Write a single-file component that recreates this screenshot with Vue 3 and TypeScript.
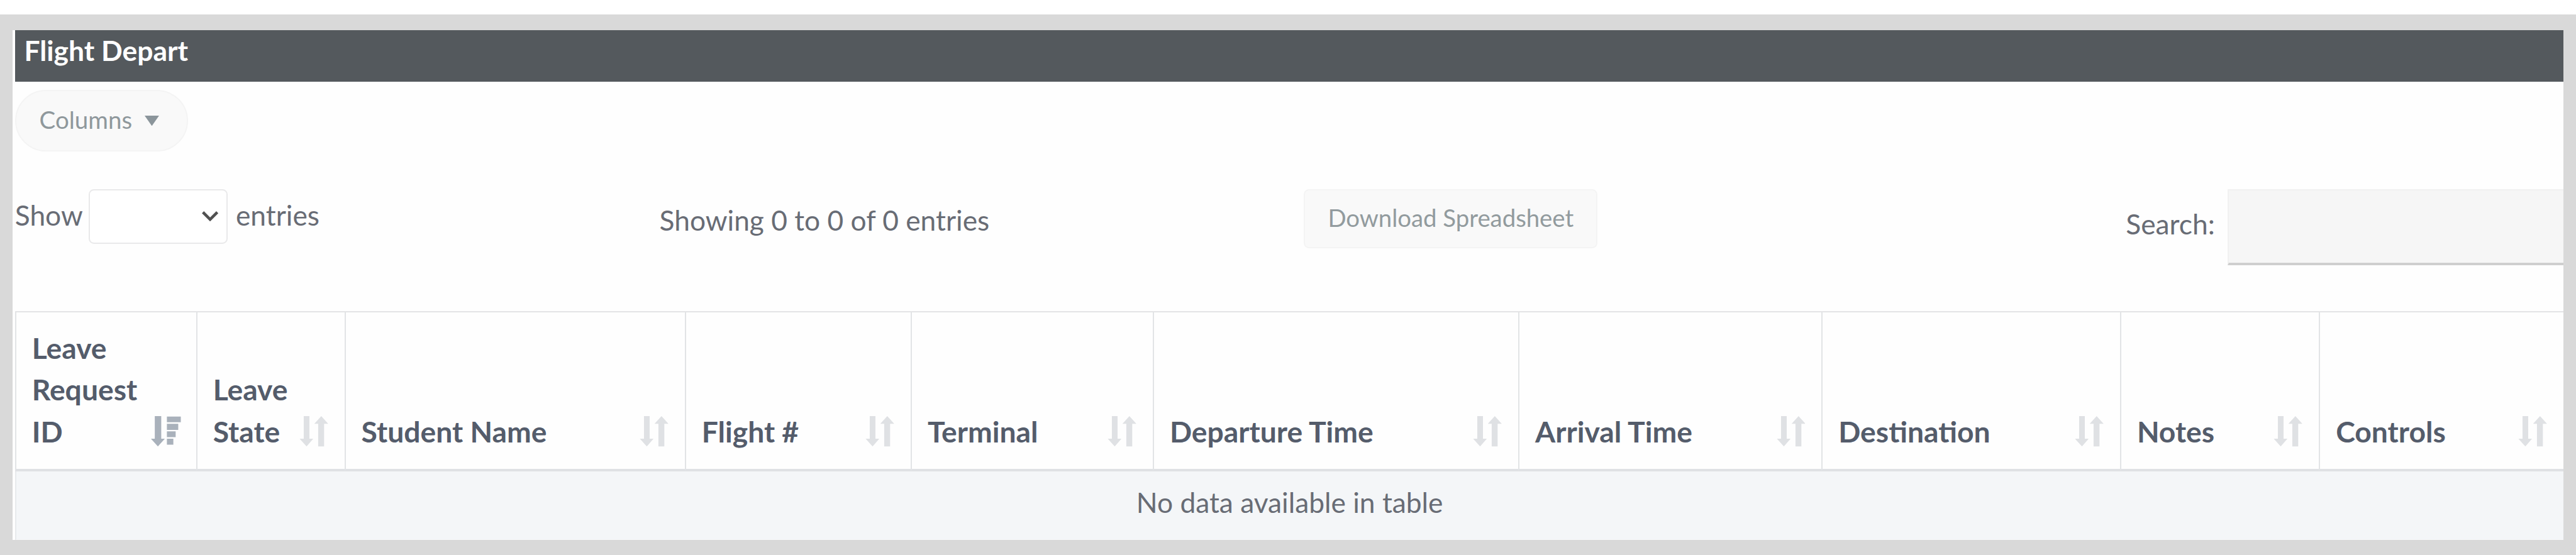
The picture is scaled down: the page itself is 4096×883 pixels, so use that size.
<script setup lang="ts">
interface Column {
  label: string
  width: number
  active?: boolean
}

// Widths are shares of the table's full width.
const columns: Column[] = [
  { label: 'Leave Request ID', width: 351.5, active: true },
  { label: 'Leave State', width: 288 },
  { label: 'Student Name', width: 660.5 },
  { label: 'Flight #', width: 438.5 },
  { label: 'Terminal', width: 470 },
  { label: 'Departure Time', width: 709.5 },
  { label: 'Arrival Time', width: 588.5 },
  { label: 'Destination', width: 579.5 },
  { label: 'Notes', width: 386 },
  { label: 'Controls', width: 474 },
]

const total = columns.reduce((sum, c) => sum + c.width, 0)
const share = (c: Column): string => `${(c.width / total) * 100}%`
</script>

<template>
  <div class="page">
    <main class="card">
      <h1 class="title">Flight Depart</h1>

      <button class="columns-button" type="button">
        Columns
        <svg class="caret" viewBox="0 0 28 20"><path d="M0 0H28L14 20Z" /></svg>
      </button>

      <div class="toolbar">
        <label class="length">
          Show
          <span class="select">
            <svg class="chevron" viewBox="0 0 32 20"><path d="M2 2L16 16L30 2" /></svg>
          </span>
          entries
        </label>
        <div class="info">Showing 0 to 0 of 0 entries</div>
        <div class="export"><button class="download" type="button">Download Spreadsheet</button></div>
        <label class="search">
          <span class="search-label">Search:</span>
          <input class="search-input" type="text" />
        </label>
      </div>

      <table class="table">
        <colgroup>
          <col v-for="c in columns" :key="c.label" :style="{ width: share(c) }" />
        </colgroup>
        <thead>
          <tr>
            <th v-for="c in columns" :key="c.label">
              <div class="head">
                <span class="label" :class="{ narrow: c.active }">{{ c.label }}</span>
                <svg v-if="c.active" class="sort active" viewBox="0 0 58 59">
                  <path d="M7.500 0H20V44H27L13.500 59L0 44H7.500ZM31 1H58V12H31ZM31 15H53V27H31ZM31 29.500H48V41H31ZM31 44H43.500V55.500H31Z" />
                </svg>
                <svg v-else class="sort" viewBox="0 0 56 59">
                  <path d="M8.500 0H19.500V44H27L14 59L0.500 44H8.500ZM42.500 0L56 15H48V59H36.500V15H29Z" />
                </svg>
              </div>
            </th>
          </tr>
        </thead>
        <tbody>
          <tr>
            <td :colspan="columns.length">No data available in table</td>
          </tr>
        </tbody>
      </table>
    </main>
  </div>
</template>

<style>
html {
  font-size: 8.192px;
}
body {
  margin: 0;
  overflow: hidden;
  background: #fff;
}
</style>

<style scoped>
.page {
  box-sizing: border-box;
  height: 100vh;
  border-top: 2.9rem solid #fff;
  padding: 3rem 2.5rem 2.8rem;
  background: #d9d9d9;
  color: #686c75;
  font-family: Lato, "Liberation Sans", sans-serif;
  font-size: 5.41rem;
  line-height: 8.1rem;
}
.card {
  box-sizing: border-box;
  height: 99.1rem;
  padding-left: 0.4rem;
  overflow: hidden;
  background: #fefefe;
}
.title {
  box-sizing: border-box;
  height: 10.05rem;
  margin: 0;
  padding-left: 1.8rem;
  background: #54595d;
  color: #fff;
  font-size: 5.42rem;
  font-weight: 700;
  line-height: 7.9rem;
}
.columns-button {
  display: flex;
  align-items: center;
  box-sizing: border-box;
  width: 33.6rem;
  height: 11.9rem;
  margin-top: 1.65rem;
  padding: 0 0 0.6rem 4.5rem;
  border: 0.3rem solid #f4f4f4;
  border-radius: 6rem;
  background: #f9f9f9;
  color: #8f989c;
  font: inherit;
  font-size: 4.7rem;
}
.caret {
  width: 2.8rem;
  height: 2rem;
  margin: 0.6rem 0 0 2.4rem;
  fill: #8b959b;
}
.toolbar {
  display: grid;
  grid-template-columns: 125.1rem 125.1rem 1fr auto;
  align-items: start;
  height: 23.7rem;
  margin-top: 7.3rem;
}
.length {
  display: flex;
  align-items: flex-start;
  line-height: 9.9rem;
}
.select {
  display: flex;
  align-items: center;
  justify-content: flex-end;
  box-sizing: border-box;
  width: 27rem;
  height: 10.6rem;
  margin: 0 1.6rem 0 1.1rem;
  padding-right: 1.5rem;
  border: 0.3rem solid #e9e9ea;
  border-radius: 1rem;
  background: #fff;
}
.chevron {
  width: 3.2rem;
  height: 2rem;
  fill: none;
  stroke: #505050;
  stroke-width: 5.5;
}
.info {
  padding-top: 2rem;
}
.download {
  display: flex;
  align-items: center;
  justify-content: center;
  box-sizing: border-box;
  width: 57rem;
  height: 11.5rem;
  padding: 0 0 0.5rem;
  border: 0.3rem solid #f4f4f4;
  border-radius: 1rem;
  background: #f9f9f9;
  color: #929b9e;
  font: inherit;
  font-size: 4.68rem;
}
.search {
  display: flex;
  align-items: center;
}
.search-label {
  margin-right: 2.5rem;
  padding-bottom: 1.3rem;
}
.search-input {
  box-sizing: border-box;
  width: 65.1rem;
  height: 14.8rem;
  padding: 0 2rem;
  border: 0.3rem solid #f1f1f1;
  border-width: 0.3rem 0 0.5rem 0.3rem;
  border-bottom-color: #cfcfcf;
  background: #f6f6f6;
  font: inherit;
}
.table {
  width: 100%;
  height: 44.6rem;
  table-layout: fixed;
  border-collapse: separate;
  border-spacing: 0;
  border-top: 0.35rem solid #e3e4e6;
}
th {
  box-sizing: border-box;
  height: 30.9rem;
  padding: 0 3.15rem 3.3rem 3.05rem;
  border-left: 0.3rem solid #e2e4e6;
  border-bottom: 0.5rem solid #dfe1e4;
  color: #545c6b;
  font-size: 5.65rem;
  font-weight: 700;
  text-align: left;
  vertical-align: bottom;
}
.head {
  display: flex;
  align-items: flex-end;
  justify-content: space-between;
}
.narrow {
  width: 21.4rem;
}
.sort {
  flex: none;
  width: 5.6rem;
  height: 5.9rem;
  margin-bottom: 1rem;
  fill: #dfe1e4;
}
.sort.active {
  width: 5.8rem;
  margin-right: -0.25rem;
  fill: #a9b1bb;
}
td {
  box-sizing: border-box;
  padding: 0 0 1.1rem;
  border-left: 0.3rem solid #e8eaec;
  border-bottom: 0.3rem solid #f8f8f8;
  background: #f4f6f8;
  text-align: center;
  vertical-align: middle;
}
</style>
